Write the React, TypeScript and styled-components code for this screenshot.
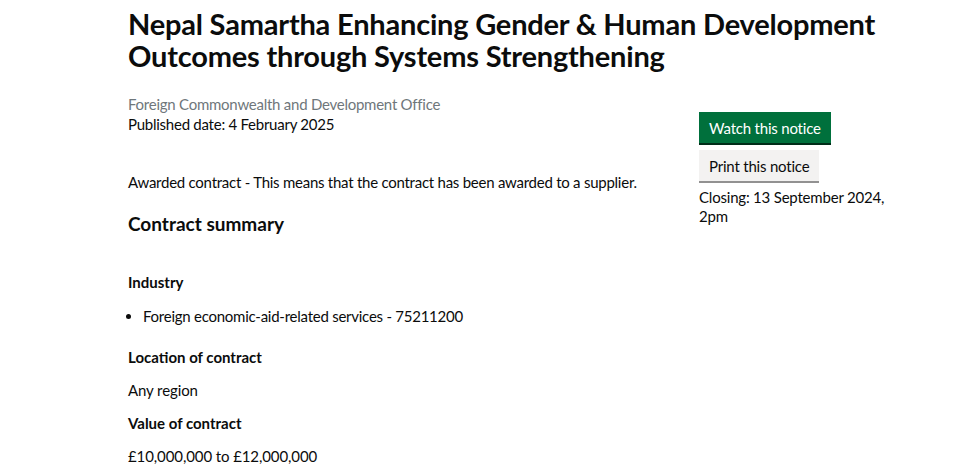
import React from "react";
import styled, { createGlobalStyle } from "styled-components";

const GlobalStyle = createGlobalStyle`
  body {
    margin: 0;
    background: #ffffff;
    color: #0b0c0c;
    font-family: Lato, "Liberation Sans", Arial, sans-serif;
  }
`;

const Page = styled.main`
  padding: 8px 0 0 128px;
  width: 780px;
`;

const Title = styled.h1`
  margin: 0;
  font-size: 29px;
  line-height: 32px;
  font-weight: 700;
  letter-spacing: -0.2px;
`;

const Columns = styled.div`
  display: flex;
  margin-top: 22px;
`;

const MainCol = styled.div`
  width: 571px;
`;

const SideCol = styled.aside`
  padding-top: 18px;
  display: flex;
  flex-direction: column;
  align-items: flex-start;
`;

const Caption = styled.p<{ $muted?: boolean }>`
  margin: 0;
  font-size: 15px;
  line-height: 20px;
  letter-spacing: -0.25px;
  color: ${(p) => (p.$muted ? "#6f777b" : "#0b0c0c")};
`;

const Body = styled.p`
  margin: 0;
  font-size: 15px;
  line-height: 20px;
  letter-spacing: -0.25px;
`;

const Button = styled.button<{ $primary?: boolean }>`
  border: 0;
  font-family: inherit;
  font-size: 15px;
  line-height: 20px;
  letter-spacing: -0.2px;
  padding: 6px 10px 5px;
  margin-bottom: 7px;
  cursor: pointer;
  color: ${(p) => (p.$primary ? "#ffffff" : "#0b0c0c")};
  background: ${(p) => (p.$primary ? "#00703c" : "#f3f2f1")};
  box-shadow: 0 2px 0 ${(p) => (p.$primary ? "#002d18" : "#929191")};
`;

const Closing = styled.p`
  margin: 0;
  font-size: 15px;
  line-height: 19px;
  letter-spacing: -0.2px;
  width: 200px;
`;

const Summary = styled.h2`
  margin: 19px 0 0;
  font-size: 19px;
  line-height: 26px;
  font-weight: 700;
`;

const Label = styled.h3`
  margin: 0;
  font-size: 15px;
  line-height: 20px;
  font-weight: 700;
`;

const Section = styled.section<{ $top: number }>`
  margin-top: ${(p) => p.$top}px;
`;

const List = styled.ul`
  margin: 14px 0 0;
  padding-left: 15px;
  font-size: 15px;
  line-height: 20px;
  letter-spacing: -0.25px;
`;

const Value = styled.p`
  margin: 13px 0 0;
  font-size: 15px;
  line-height: 20px;
  letter-spacing: -0.1px;
`;

export default function App() {
  return (
    <>
      <GlobalStyle />
      <Page>
        <Title>
          Nepal Samartha Enhancing Gender &amp; Human Development Outcomes
          through Systems Strengthening
        </Title>
        <Columns>
          <MainCol>
            <Caption $muted>Foreign Commonwealth and Development Office</Caption>
            <Caption>Published date: 4 February 2025</Caption>
            <Section $top={38}>
              <Body>
                Awarded contract - This means that the contract has been awarded
                to a supplier.
              </Body>
            </Section>
            <Summary>Contract summary</Summary>
            <Section $top={35}>
              <Label>Industry</Label>
              <List>
                <li>Foreign economic-aid-related services - 75211200</li>
              </List>
            </Section>
            <Section $top={21}>
              <Label>Location of contract</Label>
              <Value>Any region</Value>
            </Section>
            <Section $top={13}>
              <Label>Value of contract</Label>
              <Value>£10,000,000 to £12,000,000</Value>
            </Section>
          </MainCol>
          <SideCol>
            <Button $primary>Watch this notice</Button>
            <Button>Print this notice</Button>
            <Closing>Closing: 13 September 2024, 2pm</Closing>
          </SideCol>
        </Columns>
      </Page>
    </>
  );
}
